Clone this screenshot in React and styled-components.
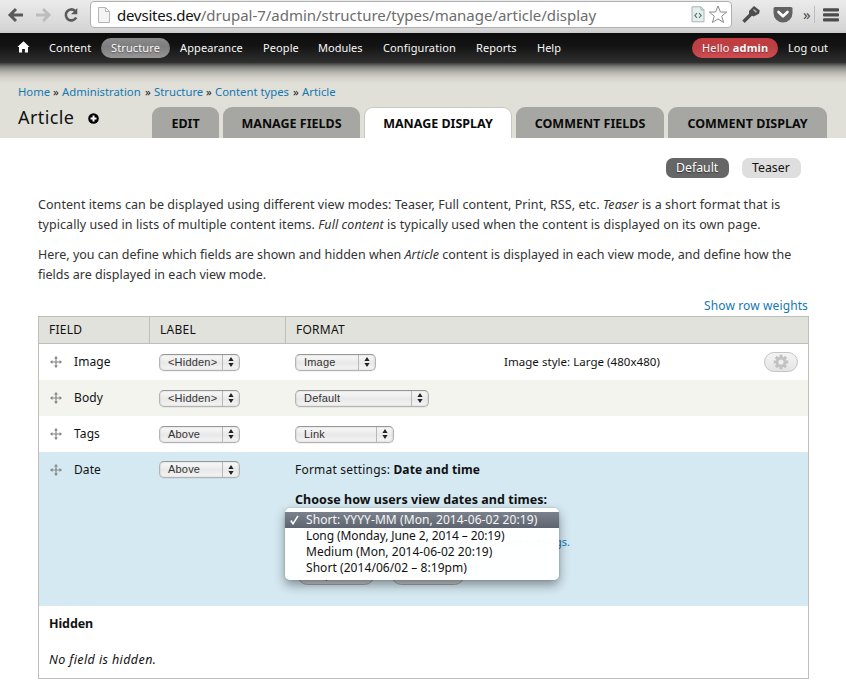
import React from 'react';
import styled, { createGlobalStyle, css } from 'styled-components';

const Global = createGlobalStyle`
  * { box-sizing: border-box; }
  body { margin: 0; background: #fff; color: #111; font: 12px/18px "Noto Sans", "Open Sans", sans-serif; overflow: hidden; }
  p { margin: 0; }
`;

const Page = styled.div`width: 846px; height: 685px; overflow: hidden; background: #fff;`;
const Summary = styled.span`
  white-space: pre; font-size: 11.5px; letter-spacing: .04px;
`;

/* Browser chrome */
const Chrome = styled.header`
  height: 33px; display: flex; align-items: flex-start; padding-left: 7px;
  background: linear-gradient(#ebebeb, #d5d5d5 90%, #c9c9c9);
`;
const NavIcons = styled.div`display: flex; gap: 11px; width: 83px; padding-top: 7px;`;
const UrlBar = styled.div`
  width: 642px; height: 27px; margin-top: 1px; padding: 0 3px 0 7px;
  display: flex; align-items: center;
  background: #fff; border: 1px solid #b0b0b0; border-radius: 4px;
`;
const Url = styled.div`
  flex: 1; margin-left: 7px; font-size: 15px; line-height: 22px; white-space: pre; color: #6c6c6c; letter-spacing: -.02px;
`;
const Host = styled.span`color: #111; letter-spacing: -.2px;`;
const UrlIcons = styled.div`display: flex; align-items: center; gap: 3px;`;
const Extensions = styled.div`display: flex; align-items: center; height: 29px; padding-left: 10px;`;
const Gap = styled.span`flex: none; width: ${(p) => p.$w}px;`;
const More = styled.span`font-size: 15px; color: #4b4b4b; width: 9px; line-height: 20px; padding-bottom: 2px;`;
const Divider = styled.span`width: 1px; height: 17px; background: #bdbdbd; margin: 0 8px 0 2px;`;

/* Admin toolbar */
const Toolbar = styled.nav`
  height: 30px; display: flex; align-items: center; padding-left: 17px;
  background: linear-gradient(#0c0c0c, #141414 45%, #303030);
  color: #f8f8f8; font-size: 11px;
`;
const HomeCell = styled.span`width: 22px; height: 14px; display: flex;`;
const pill = css`
  border-radius: 10px; text-shadow: 0 1px 1px rgba(0,0,0,.3);
  background: ${(p) => (p.$tone === 'red' ? 'linear-gradient(#c43b40, #b94044 45%, #d24d51)' : 'linear-gradient(#8b8b8b, #7d7d7d 45%, #979797)')};
`;
const ToolbarItem = styled.a`
  flex: none; width: ${(p) => p.$w}px; height: 20px; line-height: 19px; padding-left: 10px;
  margin-left: ${(p) => p.$ml || 0}px; letter-spacing: ${(p) => p.$ls ?? 0.1}px; white-space: pre;
  ${(p) => p.$tone && pill}
`;

/* Page heading */
const Branding = styled.section`
  height: 75px; padding: 20px 19px 0 18px; display: flex; flex-direction: column; justify-content: space-between;
  background: linear-gradient(rgba(0,0,0,.72), rgba(0,0,0,.42) 4px, rgba(0,0,0,.2) 9px, rgba(0,0,0,.06) 15px, transparent 21px), #e0e0d8;
`;
const Breadcrumb = styled.div`display: flex; height: 18px; font-size: 11.3px; color: #222;`;
const Crumb = styled.a`width: ${(p) => p.$w}px; color: #1478b2; white-space: pre;`;
const Sep = styled.span`width: 9px;`;
const HeadRow = styled.div`display: flex; height: 31px;`;
const Title = styled.h1`
  margin: -4px 0 0; width: 134px; display: flex; align-items: center; gap: 14px; height: 27px;
  font-weight: 400; font-size: 18px; letter-spacing: .4px; color: #111;
`;
const AddIcon = styled.svg`margin-top: 4px;`;
const Tab = styled.a`
  width: ${(p) => p.$w}px; margin-right: ${(p) => p.$mr ?? 4}px; height: 31px; line-height: 33px;
  text-align: center; border-radius: 9px 9px 0 0; font-size: 12.5px; font-weight: 700; color: #0a0a0a; white-space: nowrap;
  background: ${(p) => (p.$active ? '#fff' : '#a6a7a2')};
  border: ${(p) => (p.$active ? '1px solid #c9c9c2' : '0')};
  border-bottom: 0;
  ${(p) => p.$active && 'line-height: 31px;'}
`;

/* Content */
const Content = styled.main`padding: 20px 37px 0 38px; height: 547px;`;
const ViewModes = styled.div`display: flex; justify-content: flex-end; gap: 13px; height: 20px; padding-right: 8px;`;
const ViewMode = styled.a`
  width: ${(p) => p.$w}px; height: 20px; line-height: 19px; padding-left: 10px; border-radius: 7px; font-size: 12.3px;
  ${(p) => (p.$active ? 'background:#666; color:#fff; text-shadow:0 1px 1px #333;' : 'background:#dedede; color:#111;')}
`;
const Help = styled.div`
  display: flex; flex-direction: column; gap: 10px; margin-top: 17px;
  font-size: 12.5px; line-height: 20px; color: #333;
`;
const Line = styled.div`white-space: pre; letter-spacing: ${(p) => p.$ls}px;`;
const WeightsLink = styled.a`
  display: block; margin-top: 11px; height: 20px; line-height: 20px; text-align: right; width: 770px;
  color: #1478b2; letter-spacing: .12px;
`;

const Table = styled.div`
  width: 771px; height: 363px; border: 1px solid #bebfb9; background: #fff;
`;
const HeaderRow = styled.div`
  display: grid; grid-template-columns: 111px 136px 1fr; height: 27px;
  background: #e1e2dc; border-bottom: 1px solid #bebfb9;
`;
const HeaderCell = styled.div`
  padding-left: 10px; line-height: 25px; color: #111; letter-spacing: .25px;
  border-right: ${(p) => (p.$last ? '0' : '1px solid #bebfb9')};
`;
const Row = styled.div`
  display: grid; grid-template-columns: 35px 85px 136px 209px 1fr 34px; align-items: center;
  height: 36px; padding-right: 10px; background: ${(p) => (p.$even ? '#f3f4ee' : '#fff')};
`;
const Drag = styled.span`display: flex; padding-left: 11px;`;
const ActiveRow = styled(Row)`
  height: 154px; align-items: start; background: #d5e9f2; grid-template-columns: 35px 85px 136px 1fr;
  > * { margin-top: 9px; }
  > ${Drag} { margin-top: 12px; }
`;
const Select = styled.span`
  display: flex; width: ${(p) => p.$w}px; height: 17px; padding-left: 8px;
  font: 11px/15px "Liberation Sans", Arial, sans-serif; color: #333; letter-spacing: .2px;
  border: 1px solid #b4b4b4; border-top-color: #969696; border-radius: 5px;
  background: linear-gradient(#f9f9f9, #e8e8e8 55%, #f6f6f6);
  box-shadow: inset 0 0 2px rgba(0,0,0,.22), 0 1px 0 rgba(0,0,0,.05);
`;
const SelectLabel = styled.span`flex: 1;`;
const Stepper = styled.span`
  width: 17px; display: flex; align-items: center; justify-content: center; border-left: 1px solid #b8b8b8;
`;
const ActiveSelect = styled.div`display: flex;`;
const FieldName = styled.span`letter-spacing: .1px; color: #111;`;
const GearButton = styled.span`
  width: 34px; height: 20px; display: flex; align-items: center; justify-content: center;
  border: 1px solid #c4c4c4; border-radius: 10px; background: linear-gradient(#f4f4f4, #e4e4e4);
`;

const Settings = styled.div`position: relative; height: 140px;`;
const SettingsLine = styled.div`line-height: 18px; height: 30px; letter-spacing: .2px; white-space: pre; b { letter-spacing: .15px; }`;
const SettingsLabel = styled.div`line-height: 18px; height: 42px; font-size: 12.5px; font-weight: 700; letter-spacing: .04px;`;
const Description = styled.div`
  width: 275px; font-size: 11px; line-height: 18px; text-align: right; white-space: nowrap; color: #444;
  a { color: #1478b2; }
`;
const Buttons = styled.div`display: flex; gap: 16px; padding: 13px 0 0 2px;`;
const Button = styled.span`
  width: ${(p) => p.$w}px; height: 21px; text-align: center; font-size: 11px; line-height: 18px; color: #555;
  border: 1px solid #9aa3a6; border-radius: 11px; background: #c9cdce;
`;
const Menu = styled.div`
  position: absolute; left: -10px; top: 47px; width: 274px; height: 72px; padding: 4px 0;
  background: rgba(255,255,255,.975); border-radius: 5px;
  box-shadow: 0 5px 11px rgba(0,0,0,.4), 0 0 2px rgba(0,0,0,.22);
`;
const Option = styled.div`
  display: flex; align-items: center; height: 16px; padding-bottom: 2px; line-height: 15px; white-space: pre; letter-spacing: ${(p) => p.$ls}px;
  ${(p) => (p.$selected ? 'color:#f5f5f5; background:linear-gradient(#7c828d,#5d646f);' : 'color:#111;')}
`;
const Check = styled.span`width: 21px; height: 16px; padding: 4px 0 0 5px; display: flex;`;

const HiddenTitle = styled.div`
  height: 36px; line-height: 35px; padding-left: 10px; font-size: 12.5px; font-weight: 700; letter-spacing: -.1px;
`;
const HiddenText = styled.div`
  height: 36px; line-height: 35px; padding-left: 10px; font-size: 12.5px; font-style: italic; letter-spacing: .4px;
`;

const Arrow = ({ back }) => (
  <svg width="17" height="16" viewBox="0 0 17 16" fill="none" stroke={back ? '#5a5a5a' : '#bdbdbd'} strokeWidth="3">
    {back ? <path d="M16 8H4M9 2L3 8l6 6" /> : <path d="M1 8h12M8 2l6 6-6 6" />}
  </svg>
);
const Reload = () => (
  <svg width="17" height="16" viewBox="0 0 17 16">
    <path d="M13.2 10.5A5.5 5.5 0 1 1 12 3.8" fill="none" stroke="#5a5a5a" strokeWidth="2.6" />
    <path d="M14.3 1v6.2H8z" fill="#5a5a5a" />
  </svg>
);
const DocIcon = () => (
  <svg width="12" height="16" viewBox="0 0 12 16" fill="#f4f4f4" stroke="#b5b5b5">
    <path d="M.5.5h7l4 4v11H.5zM7.5.5v4h4" />
  </svg>
);
const CodeDoc = () => (
  <svg width="14" height="17" viewBox="0 0 14 17" fill="none">
    <path d="M1 .8h9l3 3v12H1z" fill="#e3efed" stroke="#a7b5b3" />
    <path d="M10 1v3h3" stroke="#a7b5b3" />
    <path d="M6 7.2L3.8 9.5 6 11.8M8 7.2l2.2 2.3L8 11.8" stroke="#617573" strokeWidth="1.1" />
  </svg>
);
const Star = () => (
  <svg width="20" height="19" viewBox="0 0 20 19">
    <path d="M10 1l2.4 6H18.7l-5 4.2 1.9 6.3L10 13.9l-5.6 3.6 1.9-6.3-5-4.2H7.6z" fill="#fff" stroke="#8a8a8a" strokeLinejoin="round" />
  </svg>
);
const Key = () => (
  <svg width="19" height="19" viewBox="0 0 19 19">
    <path d="M1.5 16.8l7.5-7.5" stroke="#4c4c4c" strokeWidth="3.4" />
    <path d="M7 6l5-5 5.8 4.5-.8 3.3-5.5 2.7L7 9z" fill="#4c4c4c" />
    <path d="M11.5 4.500l3 2.8" stroke="#bbb" strokeWidth="1.5" />
  </svg>
);
const Pocket = () => (
  <svg width="20" height="18" viewBox="0 0 20 18">
    <path d="M2 1h16q1.5 0 1.5 1.5V7a9.5 9.5 0 0 1-19 0V2.500Q.5 1 2 1z" fill="#626262" />
    <path d="M5.5 6L10 10.3 14.5 6" fill="none" stroke="#fff" strokeWidth="2.6" strokeLinecap="round" strokeLinejoin="round" />
  </svg>
);
const Burger = () => (
  <svg width="16" height="14" viewBox="0 0 16 14" fill="#4c4c4c">
    <rect width="16" height="3.2" rx="1" y=".3" /><rect width="16" height="3.2" rx="1" y="5.3" /><rect width="16" height="3.2" rx="1" y="10.3" />
  </svg>
);
const House = () => (
  <svg width="13" height="12" viewBox="0 0 13 12">
    <path d="M6.500.3L12.6 6H11v5.500H7.9V8H5.1v3.500H2V6H.4z" fill="#fff" />
  </svg>
);
const Move = () => (
  <svg width="12" height="12" viewBox="0 0 12 12">
    <path d="M6 1v10M1 6h10" stroke="#858585" strokeWidth="1.2" />
    <path d="M6 0l2 2.500H4zM6 12l2-2.500H4zM0 6l2.500-2v4zM12 6L9.500 4v4z" fill="#858585" />
  </svg>
);
const UpDown = () => (
  <svg width="6" height="10" viewBox="0 0 6 10" fill="#222"><path d="M3 0l2.600 4H.4zM3 10l2.600-4H.4z" /></svg>
);
const Gear = () => (
  <svg width="16" height="16" viewBox="-8 -8 16 16">
    <g fill="#c2c2c2">
      {[0, 45, 90, 135].map((a) => <rect key={a} x="-1.5" y="-7.3" width="3" height="14.6" transform={`rotate(${a})`} />)}
      <circle r="5.3" />
    </g>
    <circle r="2.6" fill="#eee" />
  </svg>
);

const Picker = ({ w, children }) => (
  <Select $w={w}><SelectLabel>{children}</SelectLabel><Stepper><UpDown /></Stepper></Select>
);

const menuItems = [
  ['Content', 62, 0, 0.15], ['Structure', 69, 0, 0.12, 'grey'], ['Appearance', 73, 0, 0.12], ['People', 45, 10, 0.1], ['Modules', 54, 10, 0],
  ['Configuration', 83, 11, 0.12], ['Reports', 51, 10, 0.05], ['Help', 45, 10, 0],
];
const rows = [
  ['Image', '<Hidden>', 'Image', 81], ['Body', '<Hidden>', 'Default', 134], ['Tags', 'Above', 'Link', 99],
];
const options = [
  ['Short: YYYY-MM (Mon, 2014-06-02 20:19)', 0.08], ['Long (Monday, June 2, 2014 – 20:19)', -0.1],
  ['Medium (Mon, 2014-06-02 20:19)', 0.03], ['Short (2014/06/02 – 8:19pm)', 0.06],
];

export default function App() {
  return (
    <Page>
      <Global />
      <Chrome>
        <NavIcons><Arrow back /><Arrow /><Reload /></NavIcons>
        <UrlBar>
          <DocIcon />
          <Url><Host>devsites.dev</Host>/drupal-7/admin/structure/types/manage/article/display</Url>
          <UrlIcons><CodeDoc /><Star /></UrlIcons>
        </UrlBar>
        <Extensions>
          <Key /><Gap $w={12} /><Pocket /><Gap $w={10} /><More>»</More><Divider /><Burger />
        </Extensions>
      </Chrome>
      <Toolbar>
        <HomeCell><House /></HomeCell>
        {menuItems.map(([label, w, ml, ls, tone]) => (
          <ToolbarItem key={label} $w={w} $ml={ml} $ls={ls} $tone={tone}>{label}</ToolbarItem>
        ))}
        <ToolbarItem $w={86} $ml={120} $ls={0.2} $tone="red">Hello <b>admin</b></ToolbarItem>
        <ToolbarItem $w={60}>Log out</ToolbarItem>
      </Toolbar>
      <Branding>
        <Breadcrumb>
          <Crumb $w={35}>Home</Crumb><Sep>»</Sep><Crumb $w={83}>Administration</Crumb><Sep>»</Sep>
          <Crumb $w={52}>Structure</Crumb><Sep>»</Sep><Crumb $w={78}>Content types</Crumb><Sep>»</Sep><Crumb $w={40}>Article</Crumb>
        </Breadcrumb>
        <HeadRow>
          <Title>
            Article
            <AddIcon width="11" height="11" viewBox="0 0 11 11"><circle cx="5.5" cy="5.5" r="5.3" fill="#000" /><path d="M5.5 2.500v6M2.500 5.500h6" stroke="#fff" strokeWidth="2" /></AddIcon>
          </Title>
          <Tab $w={67}>EDIT</Tab><Tab $w={137}>MANAGE FIELDS</Tab><Tab $w={148} $active>MANAGE DISPLAY</Tab>
          <Tab $w={148}>COMMENT FIELDS</Tab><Tab $w={159} $mr={0}>COMMENT DISPLAY</Tab>
        </HeadRow>
      </Branding>
      <Content>
        <ViewModes><ViewMode $w={63} $active>Default</ViewMode><ViewMode $w={59}>Teaser</ViewMode></ViewModes>
        <Help>
          <div>
            <Line $ls={0.067}>Content items can be displayed using different view modes: Teaser, Full content, Print, RSS, etc. <i>Teaser</i> is a short format that is</Line>
            <Line $ls={0.064}>typically used in lists of multiple content items. <i>Full content</i> is typically used when the content is displayed on its own page.</Line>
          </div>
          <div>
            <Line $ls={0.005}>Here, you can define which fields are shown and hidden when <i>Article</i> content is displayed in each view mode, and define how the</Line>
            <Line $ls={0}>fields are displayed in each view mode.</Line>
          </div>
        </Help>
        <WeightsLink>Show row weights</WeightsLink>
        <Table>
          <HeaderRow><HeaderCell>FIELD</HeaderCell><HeaderCell>LABEL</HeaderCell><HeaderCell $last>FORMAT</HeaderCell></HeaderRow>
          {rows.map(([name, label, format, w], i) => (
            <Row key={name} $even={i === 1}>
              <Drag><Move /></Drag>
              <FieldName>{name}</FieldName>
              <Picker w={81}>{label}</Picker>
              <Picker w={w}>{format}</Picker>
              {i === 0 && <><Summary>Image style: Large (480x480)</Summary><GearButton><Gear /></GearButton></>}
            </Row>
          ))}
          <ActiveRow>
            <Drag><Move /></Drag>
            <FieldName>Date</FieldName>
            <ActiveSelect><Picker w={81}>Above</Picker></ActiveSelect>
            <Settings>
              <SettingsLine>Format settings: <b>Date and time</b></SettingsLine>
              <SettingsLabel>Choose how users view dates and times:</SettingsLabel>
              <Description>To add or edit options, visit <a>Date and time settings.</a></Description>
              <Buttons><Button $w={78}>Update</Button><Button $w={74}>Cancel</Button></Buttons>
              <Menu>
                {options.map(([label, ls], i) => (
                  <Option key={label} $ls={ls} $selected={i === 0}>
                    <Check>{i === 0 && <svg width="9" height="10" viewBox="0 0 9 10"><path d="M.8 5.500L3 8.800 8 .8" fill="none" stroke="#fff" strokeWidth="1.6" /></svg>}</Check>
                    {label}
                  </Option>
                ))}
              </Menu>
            </Settings>
          </ActiveRow>
          <HiddenTitle>Hidden</HiddenTitle>
          <HiddenText>No field is hidden.</HiddenText>
        </Table>
      </Content>
    </Page>
  );
}
